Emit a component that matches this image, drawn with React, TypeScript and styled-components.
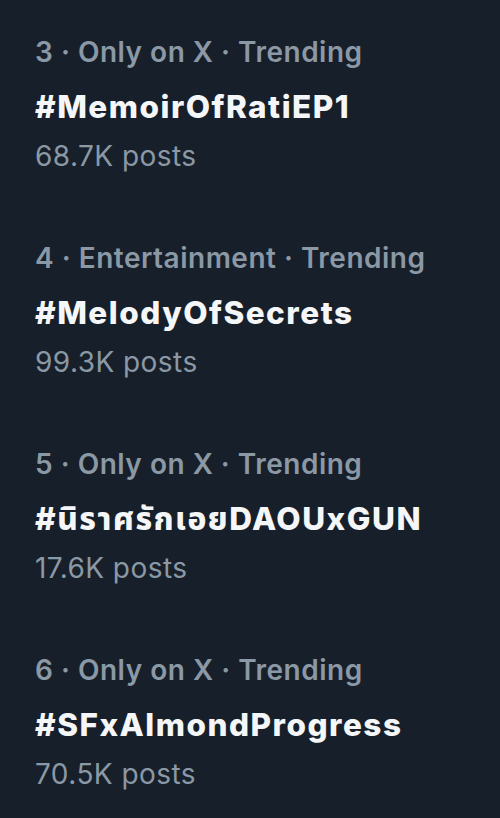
import styled, { createGlobalStyle } from "styled-components";

const GlobalStyle = createGlobalStyle`
  html, body {
    margin: 0;
    padding: 0;
    background: #17202a;
  }
`;

interface ITrend {
  rank: number;
  category: string;
  tag: string;
  posts: string;
}

const trends: ITrend[] = [
  { rank: 3, category: "Only on X", tag: "#MemoirOfRatiEP1", posts: "68.7K posts" },
  { rank: 4, category: "Entertainment", tag: "#MelodyOfSecrets", posts: "99.3K posts" },
  { rank: 5, category: "Only on X", tag: "#นิราศรักเอยDAOUxGUN", posts: "17.6K posts" },
  { rank: 6, category: "Only on X", tag: "#SFxAlmondProgress", posts: "70.5K posts" },
];

export default function App() {
  return (
    <>
      <GlobalStyle />
      <List>
        {trends.map((t) => (
          <TrendItem key={t.rank}>
            <Meta>
              {t.rank} · {t.category} · Trending
            </Meta>
            <Tag>{t.tag}</Tag>
            <Posts>{t.posts}</Posts>
          </TrendItem>
        ))}
      </List>
    </>
  );
}

const List = styled.div`
  width: 500px;
  height: 818px;
  box-sizing: border-box;
  padding: 25px 0 0 35px;
  display: flex;
  flex-direction: column;
  gap: 54px;
  background: #17202a;
  font-family: Inter, "Noto Sans", "Noto Sans Thai", sans-serif;
  overflow: hidden;
`;

const TrendItem = styled.div`
  display: flex;
  flex-direction: column;
`;

const Meta = styled.div`
  font-size: 28px;
  line-height: 54px;
  font-weight: 600;
  letter-spacing: 0.5px;
  color: #8b98a5;
  white-space: nowrap;
`;

const Tag = styled.div`
  font-size: 31.5px;
  line-height: 56px;
  font-weight: 800;
  letter-spacing: 1.5px;
  color: #f4f6f8;
  white-space: nowrap;
`;

const Posts = styled.div`
  font-size: 28px;
  line-height: 42px;
  font-weight: 400;
  letter-spacing: 0.45px;
  color: #8b98a5;
  white-space: nowrap;
`;
